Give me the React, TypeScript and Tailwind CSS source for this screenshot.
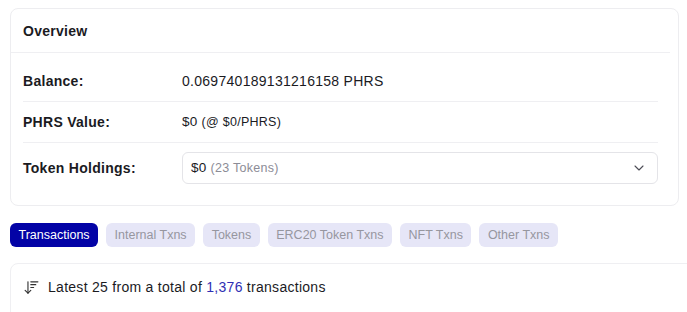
import { ArrowDownWideNarrow, ChevronDown } from 'lucide-react';

const tabs = ['Transactions', 'Internal Txns', 'Tokens', 'ERC20 Token Txns', 'NFT Txns', 'Other Txns'];

const App = () => {
  return (
    <div className="h-[312px] bg-white pl-[10px] pt-2 font-['Liberation_Sans',Arial,sans-serif] text-[#1b1b1f] overflow-hidden">
      {/* overview card */}
      <div className="mr-2 rounded-lg border border-[#ededf0] bg-white">
        <div className="mr-2 flex h-11 items-center border-b border-[#efeff2] pl-3">
          <h2 className="text-sm font-bold tracking-[0.02em]">Overview</h2>
        </div>
        <div className="pl-3 pr-5 pt-2 pb-[21px]">
          <div className="flex items-center border-b border-[#efeff2] py-[10px] text-sm">
            <span className="w-[159px] font-bold tracking-[0.02em]">Balance:</span>
            <span className="tracking-[0.02em]">0.069740189131216158 PHRS</span>
          </div>
          <div className="flex items-center border-b border-[#efeff2] py-[10px] text-sm">
            <span className="w-[159px] font-bold tracking-[0.02em]">PHRS Value:</span>
            <span className="text-[13.5px] tracking-[0.02em]">
              $0 <span className="text-[12.5px]">(@ $0/PHRS)</span>
            </span>
          </div>
          <div className="flex items-center pt-[9px] text-sm">
            <span className="w-[159px] font-bold tracking-[0.02em]">Token Holdings:</span>
            <button className="flex h-8 flex-1 items-center justify-between rounded-md border border-[#e4e4e8] pl-2 pr-[10px] text-left">
              <span className="text-[13.5px] tracking-[0.02em]">
                $0 <span className="text-[12.5px] text-[#8c8c96]">(23 Tokens)</span>
              </span>
              <ChevronDown size={16} strokeWidth={1.6} className="text-[#4b4b55]" />
            </button>
          </div>
        </div>
      </div>

      {/* tabs */}
      <div className="mt-[17px] flex gap-2">
        {tabs.map((t, i) => (
          <button
            key={t}
            className={
              i === 0
                ? 'h-6 rounded-md bg-[#0303a6] px-[8.5px] text-[12.5px] font-medium text-white'
                : 'h-6 rounded-md bg-[#e6e6f7] px-[8.5px] text-[12.5px] text-[#96969f]'
            }
          >
            {t}
          </button>
        ))}
      </div>

      {/* transactions card */}
      <div className="mt-4 -mr-4 h-16 rounded-tl-lg border border-[#efeff2] pl-3 pt-[13px]">
        <div className="flex items-center gap-2 text-sm tracking-[0.02em]">
          <ArrowDownWideNarrow size={17} strokeWidth={1.6} className="text-[#333]" />
          <span>
            Latest 25 from a total of <span className="text-[#2f2fb4]">1,376</span> transactions
          </span>
        </div>
      </div>
    </div>
  );
};

export default App;
